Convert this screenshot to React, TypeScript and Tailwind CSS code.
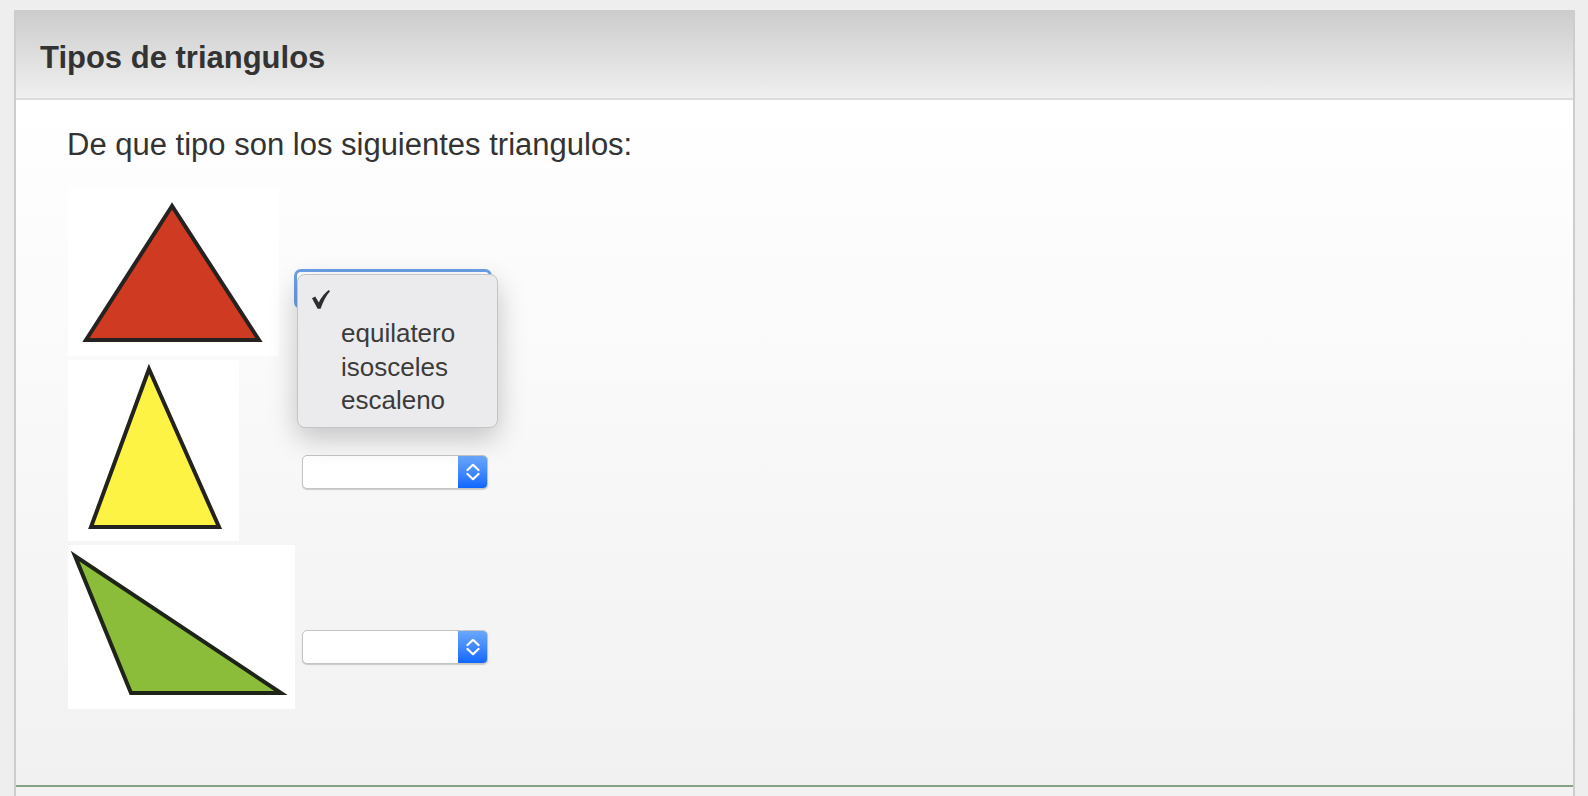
import React from 'react';

const Chevrons = () => (
  <svg width="14" height="18" viewBox="0 0 14 18" fill="none" stroke="white" strokeWidth="2.2" strokeLinecap="round" strokeLinejoin="round">
    <path d="M1.5 7 L7 1.8 L12.5 7" />
    <path d="M1.5 11 L7 16.2 L12.5 11" />
  </svg>
);

const Select = ({ className = '' }: { className?: string }) => (
  <div
    className={`flex h-[34px] w-[186px] overflow-hidden rounded-[5px] border border-[#c4c4c4] bg-white shadow-[0_1px_1px_rgba(0,0,0,0.18)] ${className}`}
  >
    <div className="flex-1" />
    <div className="flex w-[29px] items-center justify-center bg-gradient-to-b from-[#6aa7fa] to-[#0e66fe]">
      <Chevrons />
    </div>
  </div>
);

const CheckMark = () => (
  <svg width="18" height="19" viewBox="0 0 18 19" className="absolute left-[14px] top-[15px]">
    <path d="M0 8.2 L3.2 6.6 L6.8 12.4 Q10.5 4.6 16.8 0 L18 1.2 Q12.4 7.6 8.6 18.8 L5.6 18.8 Z" fill="#2e2e2e" />
  </svg>
);

const options = ['equilatero', 'isosceles', 'escaleno'];

const App = () => {
  return (
    <div className="min-h-screen bg-[#eeeeee] pl-[14px] pr-[13px] pt-[10px] font-['Liberation_Sans',Arial,sans-serif] text-[#333333]">
      <div className="border-x-2 border-[#cdcdcd]">
        {/* Panel heading */}
        <div className="h-[90px] border-b-2 border-[#dcdcdc] bg-gradient-to-b from-[#cccccc] to-[#f0f0f0] pl-[24px] pt-[32px]">
          <h1 className="text-[31px] font-bold leading-none">Tipos de triangulos</h1>
        </div>

        {/* Panel body */}
        <div className="h-[687px] border-b-2 border-[#86a386] bg-gradient-to-b from-white to-[#f1f1f1] pl-[51px] pt-[29px]">
          <p className="text-[31px] leading-none">De que tipo son los siguientes triangulos:</p>

          <div className="mt-[29px] flex flex-col gap-[4px]">
            {/* Row 1 - open dropdown */}
            <div className="relative flex items-start">
              <div className="w-[235px]">
                <svg width="211" height="167" className="ml-[1px] block bg-white">
                  <polygon points="104,17 18,151 191,151" fill="#cf3a22" stroke="#262220" strokeWidth="4" strokeLinejoin="miter" />
                </svg>
              </div>
              {/* focused select (ring), mostly hidden by the open menu */}
              <div className="-ml-[8px] mt-[80px] h-[40px] w-[198px] rounded-[7px] border-[3px] border-[#6b9fe8] bg-white" />

              <div className="absolute left-[230px] top-[85px] h-[154px] w-[201px] rounded-[8px] border border-[#c4c4c6] bg-[#ebebed] pl-[43px] pt-[9px] text-[26px] leading-[33.3px] text-[#3b3b3b] shadow-[0_10px_28px_rgba(0,0,0,0.22)]">
                <CheckMark />
                <div className="h-[33.3px]" />
                {options.map((o) => (
                  <div key={o}>{o}</div>
                ))}
              </div>
            </div>

            {/* Row 2 */}
            <div className="flex items-start">
              <div className="w-[235px]">
                <svg width="171" height="181" className="ml-[1px] block bg-white">
                  <polygon points="81,9 23,167 151,167" fill="#fcf344" stroke="#24221c" strokeWidth="4" strokeLinejoin="miter" />
                </svg>
              </div>
              <Select className="mt-[95px]" />
            </div>

            {/* Row 3 */}
            <div className="flex items-start">
              <div className="w-[235px]">
                <svg width="227" height="164" className="ml-[1px] block bg-white">
                  <polygon points="7,11 63,148 213,148" fill="#8bbd3a" stroke="#1f2419" strokeWidth="4" strokeLinejoin="miter" />
                </svg>
              </div>
              <Select className="mt-[85px]" />
            </div>
          </div>
        </div>

        <div className="h-[30px] bg-[#f2f2f2]" />
      </div>
    </div>
  );
};

export default App;
